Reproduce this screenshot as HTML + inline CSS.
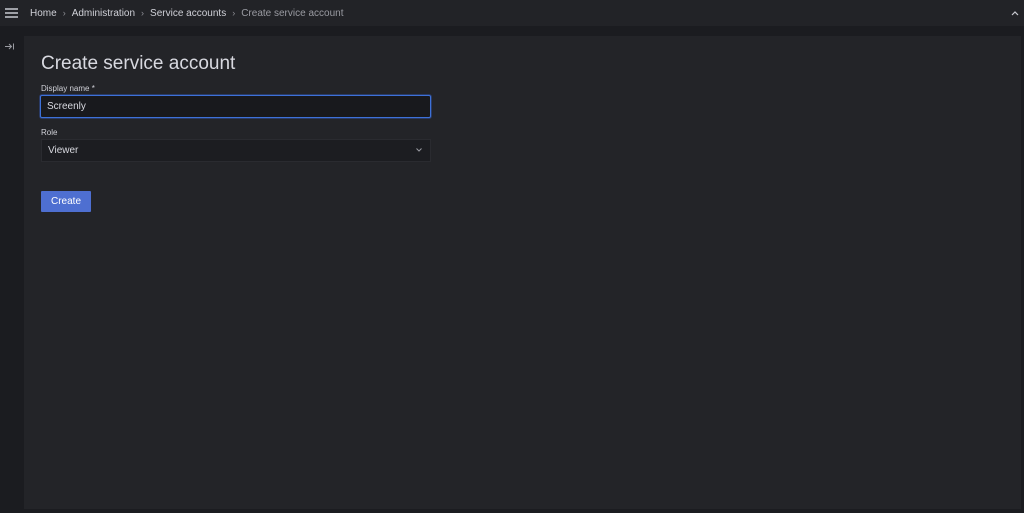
<!DOCTYPE html>
<html><head><style>
body{margin:0;width:1024px;height:513px;background:#1b1c20;font-family:"Liberation Sans",sans-serif;position:relative;overflow:hidden;color:#ccccdc}
.top{position:absolute;left:0;top:0;width:1024px;height:26px;background:#222327}
.bc{position:absolute;left:30px;top:8px;font-size:10px;color:#d0d1d8;white-space:nowrap}
.bc .s{color:#8e8f96;margin:0 6px;font-size:9px}
.bc .l{color:#9a9ba2}
.main{position:absolute;left:24px;top:36px;width:997px;height:473px;background:#232428}
h1{position:absolute;left:41px;top:53px;margin:0;font-weight:400;font-size:19px;color:#d8d9e0}
.lab{position:absolute;left:41px;font-size:8px;color:#d0d1d8}
.inp{position:absolute;left:40px;top:95px;width:389px;height:21px;border:1px solid #3d71d9;border-radius:2px;background:#18191d;box-shadow:0 0 0 1px #2a3b66}
.inp span,.sel span{position:absolute;left:6px;top:5px;font-size:10px;color:#d8d9e0}
.sel{position:absolute;left:41px;top:139px;width:388px;height:21px;background:#1c1d21;border:1px solid #2a2b30}
.btn{position:absolute;left:41px;top:191px;width:50px;height:21px;background:#4e6fd1;color:#fff;font-size:10px;text-align:center;line-height:21px;border-radius:1px}
</style></head><body>
<div class="top"></div>
<svg style="position:absolute;left:5px;top:8px" width="14" height="10"><path d="M0 1H13M0 5H13M0 9H13" stroke="#c8c9d0" stroke-width="1.4"/></svg>
<div class="bc">Home<span class="s">›</span>Administration<span class="s">›</span>Service accounts<span class="s">›</span><span class="l">Create service account</span></div>
<svg style="position:absolute;left:1011px;top:10px" width="8" height="6"><path d="M1 5L4 2L7 5" stroke="#c8c9d0" fill="none" stroke-width="1.2"/></svg>
<svg style="position:absolute;left:5px;top:43px" width="10" height="7"><path d="M0 3.5H6M4 1L6.5 3.5L4 6M8.5 0.5V6.5" stroke="#9a9ba2" fill="none" stroke-width="1"/></svg>
<div class="main"></div>
<h1>Create service account</h1>
<div class="lab" style="top:84px">Display name *</div>
<div class="inp"><span>Screenly</span></div>
<div class="lab" style="top:128px">Role</div>
<div class="sel"><span>Viewer</span><svg style="position:absolute;right:8px;top:8px" width="6" height="4"><path d="M0.5 0.5L3 3L5.5 0.5" stroke="#9a9ba2" fill="none"/></svg></div>
<div class="btn">Create</div>
</body></html>
